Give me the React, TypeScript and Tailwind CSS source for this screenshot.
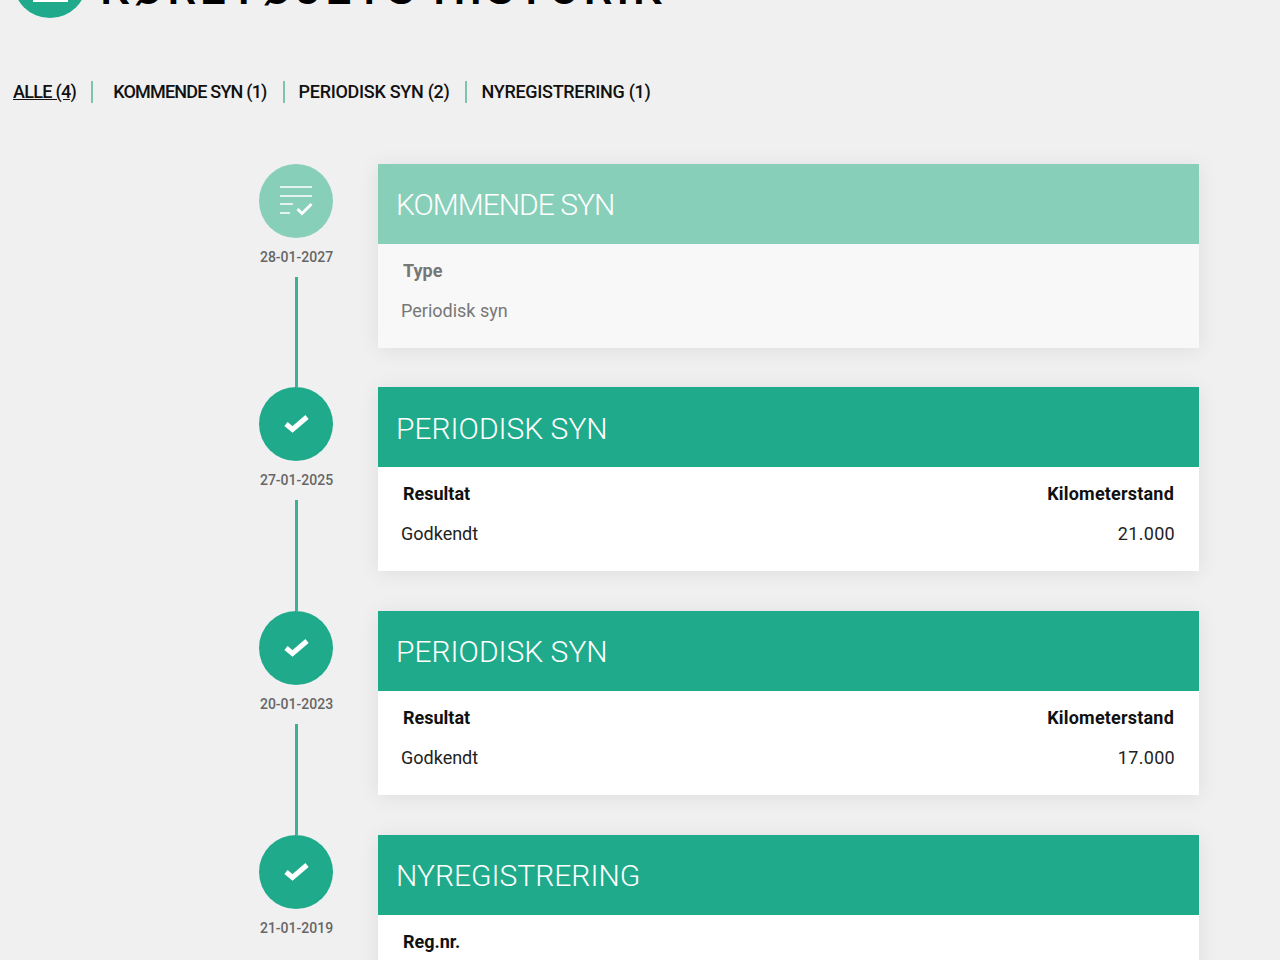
const font = { fontFamily: '"Roboto", "Liberation Sans", sans-serif' };

const filters = [
  { label: "KOMMENDE SYN (1)", className: "tracking-[-0.8px] ml-[20px]", gap: "ml-[15px]" },
  { label: "PERIODISK SYN (2)", className: "tracking-[-0.3px] ml-[14px]", gap: "ml-[16px]" },
  { label: "NYREGISTRERING (1)", className: "tracking-[-0.3px] ml-[14px]", gap: "ml-[16px]" },
];

const entries = [
  {
    date: "28-01-2027",
    title: "KOMMENDE SYN",
    titleClass: "tracking-[-1px]",
    upcoming: true,
    left: ["Type", "Periodisk syn"],
  },
  {
    date: "27-01-2025",
    title: "PERIODISK SYN",
    titleClass: "",
    left: ["Resultat", "Godkendt"],
    right: ["Kilometerstand", "21.000"],
  },
  {
    date: "20-01-2023",
    title: "PERIODISK SYN",
    titleClass: "",
    left: ["Resultat", "Godkendt"],
    right: ["Kilometerstand", "17.000"],
  },
  {
    date: "21-01-2019",
    title: "NYREGISTRERING",
    titleClass: "",
    left: ["Reg.nr."],
  },
];

function ListCheckIcon() {
  return (
    <svg width="36" height="32" viewBox="0 0 36 32" fill="none" stroke="white" strokeWidth="1.4">
      <path d="M2 2h32M2 11h32M2 19h13M2 28h10" />
      <path d="M19.5 24l4.5 4.5L33.5 19" strokeWidth="2.8" />
    </svg>
  );
}

function CheckIcon() {
  return (
    <svg width="26" height="20" viewBox="0 0 26 20" fill="none" stroke="white" strokeWidth="5">
      <path d="M3 10l6.5 5.5L24 3" />
    </svg>
  );
}

export default function App() {
  return (
    <div className="h-[960px] overflow-hidden bg-[#f0f0f0]" style={font}>
      <div className="-mt-[56px] flex items-center gap-[13px] pl-[13px]">
        <div className="flex h-[74px] w-[74px] shrink-0 items-center justify-center rounded-full bg-[#1fab8b]">
          <div className="mt-[18px] h-[24px] w-[35px] border-2 border-white" />
        </div>
        <h1 className="mt-[13px] text-[46px] leading-none font-medium tracking-[3.6px] text-black">
          KØRETØJETS HISTORIK
        </h1>
      </div>

      <nav className="mt-[60px] flex items-center pl-[13px] text-[18px] font-medium text-[#111]">
        <a className="tracking-[-0.7px] underline">ALLE (4)</a>
        {filters.map((f) => (
          <a key={f.label} className={`flex items-center ${f.gap}`}>
            <span className="h-[22px] w-[2px] bg-[#7cc4ae]" />
            <span className={f.className}>{f.label}</span>
          </a>
        ))}
      </nav>

      <ol className="mt-[58.6px] ml-[259px] flex w-[940px] flex-col">
        {entries.map((e, i) => (
          <li key={i} className="flex gap-[45px]">
            <div className="flex w-[74px] shrink-0 flex-col items-center">
              <div
                className={`flex h-[74px] w-[74px] items-center justify-center rounded-full ${
                  e.upcoming ? "bg-[#88cfba]" : "bg-[#1fab8b]"
                }`}
              >
                {e.upcoming ? <ListCheckIcon /> : <CheckIcon />}
              </div>
              <span className="mt-[9px] ml-[1px] text-[14px] leading-[20px] font-medium whitespace-nowrap text-[#666]">
                {e.date}
              </span>
              {i < entries.length - 1 && <div className="mt-[10px] h-[110.67px] w-[3px] bg-[#3fae96]" />}
            </div>
            <div className="h-fit w-[821px] shadow-[0_2px_20px_rgba(0,0,0,0.08)]">
              <h2
                className={`flex h-[80px] items-center pt-[2px] pl-[18px] text-[30px] font-light text-white ${e.titleClass} ${
                  e.upcoming ? "bg-[#88cfba]" : "bg-[#1fab8b]"
                }`}
              >
                {e.title}
              </h2>
              <div
                className={`flex h-[104px] justify-between pt-[13px] pr-[24px] pl-[25px] text-[18px] ${
                  e.upcoming ? "bg-[#f8f8f8] text-[#777]" : "bg-white text-[#222]"
                }`}
              >
                <div>
                  <div className={`font-bold ${e.upcoming ? "" : "text-[#111]"}`}>{e.left[0]}</div>
                  {e.left[1] && <div className="mt-[13px] -ml-[2px]">{e.left[1]}</div>}
                </div>
                {e.right && (
                  <div className="text-right">
                    <div className="mr-[1px] font-bold tracking-[0.2px] text-[#111]">{e.right[0]}</div>
                    <div className="mt-[13px] tracking-[0.3px]">{e.right[1]}</div>
                  </div>
                )}
              </div>
            </div>
          </li>
        ))}
      </ol>
    </div>
  );
}
